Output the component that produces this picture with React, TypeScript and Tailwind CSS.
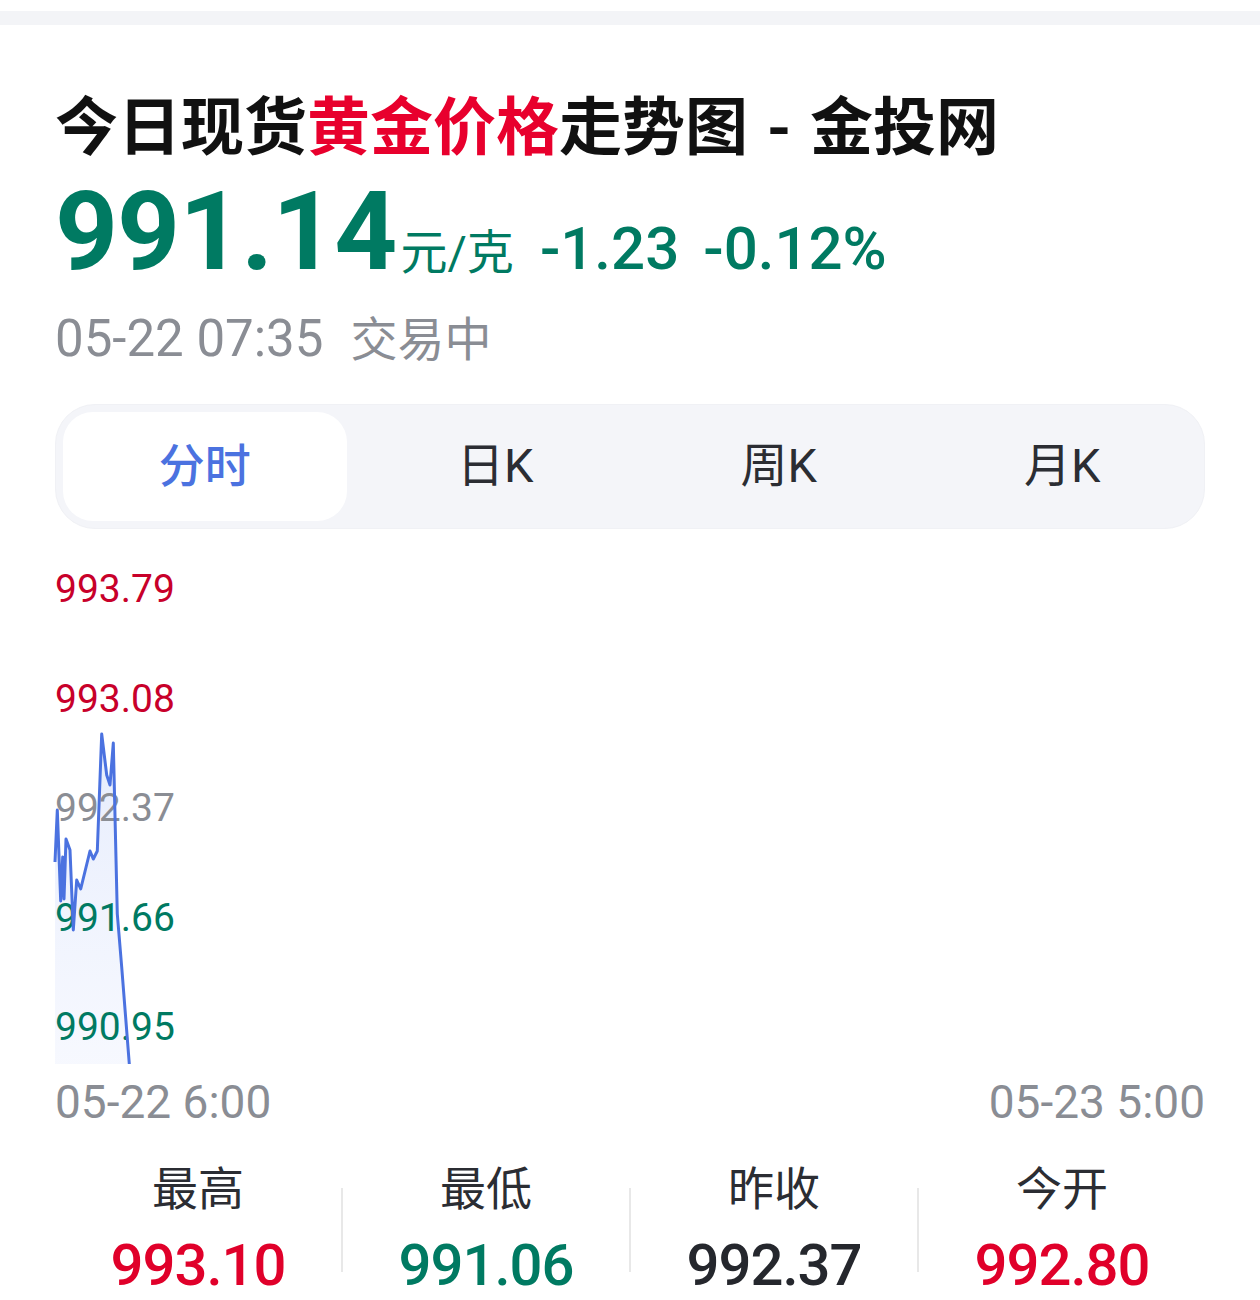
import React from "react";

const FONT = { fontFamily: 'Roboto, "Noto Sans CJK SC", sans-serif' };

const linePts: [number, number][] = [
  [55, 863], [57.3, 811], [60.7, 902], [62.7, 858], [64, 900], [66, 840], [70, 851],
  [73.3, 931], [76.7, 881], [80.7, 890], [90, 852], [93.3, 860], [97.3, 852],
  [101.7, 735], [106.7, 776], [110, 786], [113.3, 744], [117.3, 915], [121.7, 968], [129.3, 1065],
];

function Chart() {
  const ox = 55;
  const oy = 568;
  const pts = linePts.map(([x, y]) => `${(x - ox).toFixed(1)},${(y - oy).toFixed(1)}`).join(" ");
  const area = `${pts} ${(129.3 - ox).toFixed(1)},${1065 - oy} 0,${1065 - oy}`;
  const labels: { v: string; c: string }[] = [
    { v: "993.79", c: "text-[#c8002a]" },
    { v: "993.08", c: "text-[#c8002a]" },
    { v: "992.37", c: "text-[#8a8d94]" },
    { v: "991.66", c: "text-[#007a62]" },
    { v: "990.95", c: "text-[#007a62]" },
  ];
  return (
    <div className="relative mt-[38px] h-[482px]">
      <svg className="absolute left-0 top-0 overflow-visible" width="200" height="500">
        <defs>
          <linearGradient id="fillg" x1="0" y1="0" x2="0" y2="1">
            <stop offset="0" stopColor="#e3eafc" stopOpacity="0.9" />
            <stop offset="1" stopColor="#f1f4fe" stopOpacity="0.6" />
          </linearGradient>
        </defs>
        <polygon points={area} fill="url(#fillg)" />
      </svg>
      <div className="relative flex flex-col gap-[65.5px]">
        {labels.map((l) => (
          <div key={l.v} className={`h-[44px] text-[39px] leading-[44px] ${l.c}`}>
            {l.v}
          </div>
        ))}
      </div>
      <svg className="absolute left-0 top-0 overflow-visible" width="200" height="500">
        <polyline points={pts} fill="none" stroke="#4b72e0" strokeWidth="3" strokeLinejoin="round" />
      </svg>
    </div>
  );
}

function Stat({ label, value, color }: { label: string; value: string; color: string }) {
  return (
    <div className="flex flex-col items-center">
      <div className="text-[46px] leading-[46px] text-[#2b2d33]">{label}</div>
      <div className={`mt-[24px] text-[58px] leading-[58px] font-medium tracking-[-1px] ${color}`}>{value}</div>
    </div>
  );
}

export default function App() {
  return (
    <div className="w-[1260px] min-h-[1300px] bg-white" style={FONT}>
      <div className="h-[11px]" />
      <div className="h-[14px] bg-[#f3f4f7]" />
      <div className="px-[55px]">
        <div className="mt-[65px] text-[63px] leading-[63px] font-bold text-[#111111] whitespace-nowrap" style={{ fontFamily: '"Noto Sans CJK SC", sans-serif' }}>
          今日现货<span className="text-[#e8002d]">黄金价格</span>走势图 <span className="mx-[5px]">-</span> 金投网
        </div>
        <div className="mt-[24px] flex items-baseline text-[#007a62] whitespace-nowrap">
          <span className="text-[110px] leading-[110px] font-bold tracking-[-1px]">991.14</span>
          <span className="ml-[4px] text-[47px]">元/克</span>
          <span className="ml-[26px] text-[60px] font-medium">-1.23</span>
          <span className="ml-[24px] text-[60px] font-medium">-0.12%</span>
        </div>
        <div className="mt-[19px] flex items-baseline h-[51px] text-[#8a8d94] whitespace-nowrap">
          <span className="text-[51px] leading-[51px]">05-22 07:35</span>
          <span className="ml-[27px] text-[47px] leading-[51px]">交易中</span>
        </div>
        <div className="mt-[40px] h-[125px] rounded-[40px] bg-[#f4f5f9] p-[7px] grid grid-cols-4 border border-[#f0f1f5]">
          <div className="rounded-[30px] bg-white flex items-center justify-center text-[46px] font-medium text-[#4b72e0]">
            分时
          </div>
          <div className="pl-[14px] flex items-center justify-center text-[47px] text-[#2b2d33]">日K</div>
          <div className="pl-[14px] flex items-center justify-center text-[47px] text-[#2b2d33]">周K</div>
          <div className="pl-[14px] flex items-center justify-center text-[47px] text-[#2b2d33]">月K</div>
        </div>
        <Chart />
        <div className="mt-[31px] flex justify-between text-[46px] leading-[44px] text-[#8a8d94]">
          <span>05-22 6:00</span>
          <span>05-23 5:00</span>
        </div>
        <div className="mt-[42px] grid grid-cols-[1fr_2px_1fr_2px_1fr_2px_1fr]">
          <Stat label="最高" value="993.10" color="text-[#e0002a]" />
          <div className="self-center h-[84px] bg-[#e8e8e8]" />
          <Stat label="最低" value="991.06" color="text-[#007a62]" />
          <div className="self-center h-[84px] bg-[#e8e8e8]" />
          <Stat label="昨收" value="992.37" color="text-[#25272d]" />
          <div className="self-center h-[84px] bg-[#e8e8e8]" />
          <Stat label="今开" value="992.80" color="text-[#e0002a]" />
        </div>
      </div>
    </div>
  );
}
